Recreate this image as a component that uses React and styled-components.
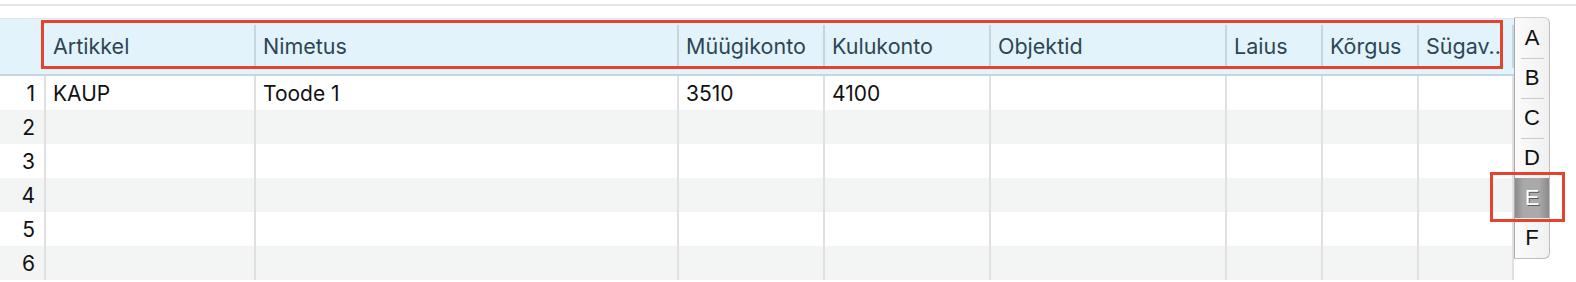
import styled, { createGlobalStyle } from 'styled-components'

const GlobalStyle = createGlobalStyle`
  html, body {
    margin: 0;
    padding: 0;
    background: #fff;
  }
  body {
    font-family: Inter, "Liberation Sans", sans-serif;
    -webkit-font-smoothing: antialiased;
  }
`

const columns = [
  { title: 'Artikkel', width: 210 },
  { title: 'Nimetus', width: 423 },
  { title: 'Müügikonto', width: 146 },
  { title: 'Kulukonto', width: 166 },
  { title: 'Objektid', width: 236 },
  { title: 'Laius', width: 96 },
  { title: 'Kõrgus', width: 96 },
  { title: 'Sügav..', width: 95 },
]

const rows = [
  ['KAUP', 'Toode 1', '3510', '4100', '', '', '', ''],
  ['', '', '', '', '', '', '', ''],
  ['', '', '', '', '', '', '', ''],
  ['', '', '', '', '', '', '', ''],
  ['', '', '', '', '', '', '', ''],
  ['', '', '', '', '', '', '', ''],
]

const letters = ['A', 'B', 'C', 'D', 'E', 'F']

const gridTemplate = `46px ${columns.map(c => c.width + 'px').join(' ')}`

const Page = styled.div`
  position: relative;
  width: 1576px;
  height: 282px;
  overflow: hidden;
`

const TopRule = styled.div`
  height: 4px;
  border-bottom: 2px solid #e6e6e6;
`

const Main = styled.div`
  display: flex;
  align-items: flex-start;
  margin-top: 11px;
`

const Table = styled.div`
  width: 1514px;
  margin-top: 1px;
`

const HeaderRow = styled.div`
  display: grid;
  grid-template-columns: ${gridTemplate};
  align-items: center;
  height: 55px;
  background: #e3f3fb;
  border-top: 1px solid #dbe5ea;
  border-bottom: 2px solid #c6d6de;
`

const HeaderCell = styled.div`
  height: 43px;
  display: flex;
  align-items: center;
  padding-left: 7px;
  padding-bottom: 2px;
  box-sizing: border-box;
  border-right: 2px solid ${p => (p.$blank ? 'transparent' : '#c8d5db')};
  color: #2c4753;
  font-size: 21.5px;
  white-space: nowrap;
  overflow: hidden;
`

const BodyRow = styled.div`
  display: grid;
  grid-template-columns: ${gridTemplate};
  height: 34px;
  background: ${p => (p.$striped ? '#f3f4f4' : '#fff')};
`

const Cell = styled.div`
  display: flex;
  align-items: center;
  justify-content: ${p => (p.$num ? 'flex-end' : 'flex-start')};
  padding: ${p => (p.$num ? '0 9px 0 0' : '0 0 0 7px')};
  border-right: 2px solid #e0e0e0;
  color: #111;
  font-size: 21px;
  white-space: nowrap;
`

const IndexBar = styled.div`
  width: 34px;
  display: flex;
  flex-direction: column;
  border-left: 1px solid #a9a9a9;
  border-right: 1px solid #bdbdbd;
  border-top: 1px solid #cfcfcf;
  border-bottom: 1px solid #bdbdbd;
  border-radius: 0 6px 6px 0;
  background: linear-gradient(to right, #fbfbfb, #f1f1f1);
  overflow: hidden;
`

const IndexItem = styled.div`
  position: relative;
  height: 40px;
  display: flex;
  align-items: center;
  justify-content: center;
  font-family: "Liberation Sans", Arial, sans-serif;
  font-size: 22px;
  color: ${p => (p.$active ? '#fff' : '#111')};
  text-shadow: ${p => (p.$active ? '1px 1px 0 #5a5a5a' : 'none')};
  background: ${p =>
    p.$active
      ? 'linear-gradient(to right, #8c8c8c, #a9a9a9 25%, #aaaaaa 70%, #8a8a8a)'
      : 'transparent'};

  &::after {
    content: '';
    display: ${p => (p.$divider ? 'block' : 'none')};
    position: absolute;
    left: 6px;
    right: 5px;
    bottom: -1px;
    height: 1px;
    background: #c9c9c9;
  }
`

const Highlight = styled.div`
  position: absolute;
  top: ${p => p.$top}px;
  left: ${p => p.$left}px;
  width: ${p => p.$width}px;
  height: ${p => p.$height}px;
  box-sizing: border-box;
  border: 3px solid #e5432d;
  pointer-events: none;
`

const App = () => {
  return (
    <Page>
      <GlobalStyle />
      <TopRule />
      <Main>
        <Table>
          <HeaderRow>
            <HeaderCell $blank />
            {columns.map(col => (
              <HeaderCell key={col.title}>{col.title}</HeaderCell>
            ))}
          </HeaderRow>
          {rows.map((row, i) => (
            <BodyRow key={i} $striped={i % 2 === 1}>
              <Cell $num>{i + 1}</Cell>
              {row.map((value, j) => (
                <Cell key={j}>{value}</Cell>
              ))}
            </BodyRow>
          ))}
        </Table>
        <IndexBar>
          {letters.map((l, i) => (
            <IndexItem key={l} $active={l === 'E'} $divider={i < 3}>
              {l}
            </IndexItem>
          ))}
        </IndexBar>
      </Main>
      <Highlight $top={20} $left={41} $width={1462} $height={49} />
      <Highlight $top={172} $left={1490} $width={75} $height={50} />
    </Page>
  )
}

export default App
